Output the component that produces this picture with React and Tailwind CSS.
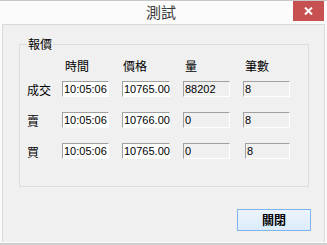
const cjk = { fontFamily: '"Noto Sans CJK TC", "Noto Sans CJK SC", sans-serif' };
const num = { fontFamily: '"Liberation Sans", Arial, sans-serif' };

const rows = [
  { label: '成交', time: '10:05:06', price: '10765.00', qty: '88202', count: '8' },
  { label: '賣', time: '10:05:06', price: '10766.00', qty: '0', count: '8' },
  { label: '買', time: '10:05:06', price: '10765.00', qty: '0', count: '8', shift: true },
];

function Field({ value, white, className = '' }) {
  return (
    <div
      className={`h-[16px] border-t border-l border-b border-r border-t-[#a0a0a0] border-l-[#a0a0a0] border-b-white border-r-white flex items-center pl-px text-[11px] leading-none text-black ${white ? 'bg-white' : 'bg-[#f0f0f0]'} ${className}`}
      style={num}
    >
      {value}
    </div>
  );
}

export default function App() {
  return (
    <div className="w-[327px] h-[245px] bg-[#fbfbfb] border-t border-b-2 border-t-[#c8c8c8] border-b-[#cfcfcf] px-[2px] flex flex-col">
      {/* title bar */}
      <div className="h-[23px] grid grid-cols-[1fr_auto_1fr] items-start">
        <div />
        <div className="h-[22px] flex items-center pr-[5px] text-[15px] text-[#3c3c3c]" style={cjk}>
          測試
        </div>
        <div className="flex justify-end pr-px">
          <button className="w-[31px] h-[20px] bg-[#c75050] flex items-center justify-center">
            <svg width="9" height="8" viewBox="0 0 9 8">
              <path d="M1 0.5 L8 7.5 M8 0.5 L1 7.5" stroke="white" strokeWidth="2" />
            </svg>
          </button>
        </div>
      </div>

      {/* client area */}
      <div className="flex-1 bg-[#f0f0f0] border-t border-l border-r border-[#d9d9d9] flex flex-col mb-px">
        <div className="relative ml-[16px] mt-[19px] w-[290px] h-[143px] border border-[#dcdcdc] pl-[7px] pt-[13px]">
          <span
            className="absolute -top-[9px] left-[7px] px-px bg-[#f0f0f0] text-[12px] leading-[16px] text-black"
            style={cjk}
          >
            報價
          </span>

          <div
            className="grid grid-cols-[22px_47px_48px_47px_47px] gap-x-[13px] text-[12px] leading-[16px] text-black"
            style={cjk}
          >
            <div />
            <div className="pl-[3px]">時間</div>
            <div className="pl-px">價格</div>
            <div className="pl-[2px]">量</div>
            <div className="pl-[2px]">筆數</div>
          </div>

          <div className="mt-[7px] grid grid-cols-[22px_47px_48px_47px_47px] gap-x-[13px] gap-y-[15px] items-center">
            {rows.map((r) => (
              <div key={r.label} className="contents">
                <div className="whitespace-nowrap text-[12px] leading-[16px] text-black translate-y-[1px]" style={cjk}>
                  {r.label}
                </div>
                <Field value={r.time} white />
                <Field value={r.price} white />
                <Field value={r.qty} />
                <Field value={r.count} className={r.shift ? 'ml-[2px]' : ''} />
              </div>
            ))}
          </div>
        </div>

        <div className="flex justify-end mt-[22px] pr-[13px]">
          <button
            className="w-[74px] h-[22px] border border-[#7eb4ea] bg-gradient-to-b from-[#ecf4fc] to-[#dcecfc] flex items-center justify-center text-[12px] font-bold text-black"
            style={cjk}
          >
            關閉
          </button>
        </div>
      </div>
    </div>
  );
}
